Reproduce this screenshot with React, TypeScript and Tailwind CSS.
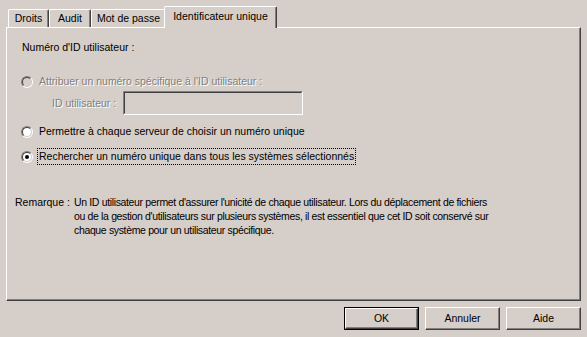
import React from "react";

const BG = "bg-[#d6cec8]";

function Radio({ checked, disabled }: { checked?: boolean; disabled?: boolean }) {
  return (
    <div
      className={`relative w-[12px] h-[12px] rounded-full border border-t-[#808080] border-l-[#808080] border-b-white border-r-white shrink-0`}
    >
      <div
        className={`w-full h-full rounded-full border border-t-[#404040] border-l-[#404040] border-b-[#d6cec8] border-r-[#d6cec8] flex items-center justify-center ${
          disabled ? "bg-[#d6cec8]" : "bg-white"
        }`}
      >
        {checked && <div className="w-[4px] h-[4px] rounded-full bg-black" />}
      </div>
    </div>
  );
}

function Tab({ label, w, selected }: { label: string; w: string; selected?: boolean }) {
  if (selected) {
    return (
      <div
        className={`relative z-10 ${w} h-[22px] -mb-[1px] ${BG} border-t border-l border-t-white border-l-white border-r border-r-[#404040] shadow-[inset_-1px_0_0_#808080] rounded-tl-[2px] rounded-tr-[2px] flex items-start justify-center pt-[3px]`}
      >
        <span className="leading-[13px] whitespace-nowrap">{label}</span>
      </div>
    );
  }
  return (
    <div
      className={`${w} h-[18px] ${BG} border-t border-l border-t-white border-l-white border-r border-r-[#404040] shadow-[inset_-1px_0_0_#808080] rounded-tl-[2px] rounded-tr-[2px] flex items-start justify-center pt-[2px]`}
    >
      <span className="leading-[13px] whitespace-nowrap">{label}</span>
    </div>
  );
}

function Button({ label, def }: { label: string; def?: boolean }) {
  if (def) {
    return (
      <div className="w-[75px] h-[23px] border border-black">
        <div className="w-full h-full border border-t-white border-l-white border-b-[#404040] border-r-[#404040] shadow-[inset_-1px_-1px_0_#808080] flex items-center justify-center">
          <span className="leading-[13px]">{label}</span>
        </div>
      </div>
    );
  }
  return (
    <div className="w-[75px] h-[23px] border border-t-white border-l-white border-b-[#404040] border-r-[#404040] shadow-[inset_-1px_-1px_0_#808080] flex items-center justify-center">
      <span className="leading-[13px]">{label}</span>
    </div>
  );
}

export default function App() {
  const disabledText = "text-[#808080] [text-shadow:1px_1px_0_#ffffff]";
  return (
    <div
      className={`w-[587px] h-[337px] ${BG} text-black text-[10.5px] font-['Liberation_Sans',Arial,sans-serif] pt-[6px] overflow-hidden`}
    >
      {/* Tabs */}
      <div className="flex items-end pl-[8px] h-[21px]">
        <Tab label="Droits" w="w-[41px]" />
        <Tab label="Audit" w="w-[42px]" />
        <Tab label="Mot de passe" w="w-[75px]" />
        <div className="-ml-[2px]">
          <Tab label="Identificateur unique" w="w-[113px]" selected />
        </div>
      </div>

      {/* Panel */}
      <div className="ml-[6px] w-[575px] h-[274px] border-t border-l border-t-white border-l-white border-r border-b border-r-[#404040] border-b-[#404040] shadow-[inset_-1px_-1px_0_#808080]">
        <div className="pl-[15px] mt-[13px] leading-[13px]">Numéro d'ID utilisateur :</div>

        {/* Radio 1 disabled */}
        <div className="flex items-center pl-[14px] mt-[19px] h-[17px]">
          <Radio disabled />
          <span className={`ml-[6px] leading-[13px] ${disabledText}`}>
            Attribuer un numéro spécifique à l'ID utilisateur :
          </span>
        </div>

        {/* ID row */}
        <div className="flex items-center pl-[45px] mt-[1px] h-[24px]">
          <span className={`leading-[13px] ${disabledText}`}>ID utilisateur :</span>
          <div className="ml-[7px] w-[180px] h-[24px] border border-t-[#808080] border-l-[#808080] border-b-white border-r-white">
            <div className="w-full h-full border border-t-[#404040] border-l-[#404040] border-b-[#d6cec8] border-r-[#d6cec8] bg-[#d6cec8]" />
          </div>
        </div>

        {/* Radio 2 */}
        <div className="flex items-center pl-[14px] mt-[8px] h-[17px]">
          <Radio />
          <span className="ml-[6px] leading-[13px]">
            Permettre à chaque serveur de choisir un numéro unique
          </span>
        </div>

        {/* Radio 3 */}
        <div className="flex items-center pl-[14px] mt-[8px] h-[17px]">
          <Radio checked />
          <span className="ml-[4px] leading-[13px] px-[1px] py-[1px] border border-dotted border-black">
            Rechercher un numéro unique dans tous les systèmes sélectionnés
          </span>
        </div>

        {/* Remarque */}
        <div className="flex pl-[8px] mt-[30px] leading-[14px] whitespace-nowrap">
          <div className="w-[59px] shrink-0">Remarque :</div>
          <div className="tracking-[-0.35px]">
            <div>Un ID utilisateur permet d'assurer l'unicité de chaque utilisateur. Lors du déplacement de fichiers</div>
            <div>ou de la gestion d'utilisateurs sur plusieurs systèmes, il est essentiel que cet ID soit conservé sur</div>
            <div>chaque système pour un utilisateur spécifique.</div>
          </div>
        </div>
      </div>

      {/* Buttons */}
      <div className="flex justify-end gap-[6px] pr-[6px] mt-[6px]">
        <Button label="OK" def />
        <Button label="Annuler" />
        <Button label="Aide" />
      </div>
    </div>
  );
}
